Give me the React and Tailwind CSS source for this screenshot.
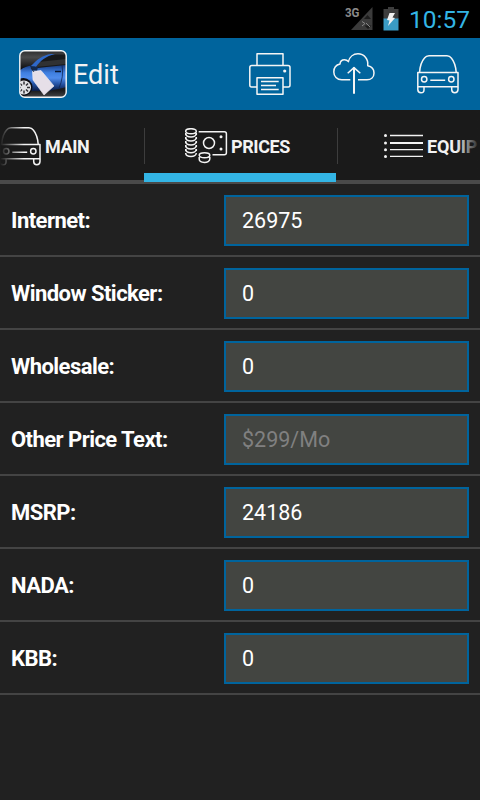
import React from "react";

const stroke = { fill: "none", stroke: "currentColor", strokeWidth: 1.5, strokeLinejoin: "round" };

function CarIcon() {
  return (
    <svg width="42" height="39" viewBox="0 0 42 39" {...stroke}>
      <path d="M2.6 17.3C3 10 5.5 5.3 7.5 3C8.6 1.5 9.8 .8 12 .8H30C32 .8 33.200 1.500 34.300 3C36.400 5.500 38.700 10 39.200 17.300" />
      <path d="M.8 17.600H41V31.700H.8Z" />
      <circle cx="7.200" cy="24.300" r="2.700" />
      <circle cx="34.300" cy="24.300" r="2.700" />
      <path d="M13.300 25.200H28.200M.8 31.700V34.500Q.8 37.700 4 37.700T7 34.500V31.700M34.700 31.700V34.500Q34.700 37.700 37.800 37.700T41 34.500V31.700" />
    </svg>
  );
}

function PrinterIcon() {
  return (
    <svg width="42" height="42" viewBox="0 0 42 42" {...stroke}>
      <path d="M8 12.500V.8H34V12.500" />
      <path d="M8 34H2.500Q.8 34 .8 32V14.500Q.8 12.500 2.800 12.500H39Q41 12.500 41 14.500V32Q41 34 39.300 34H34" />
      <path d="M8 24.700H34V41.200H8Z" />
      <path d="M12 28.600H29.700M12 32.600H27M12 36.600H29.700" />
      <circle cx="35.700" cy="18" r="1.600" fill="currentColor" stroke="none" />
    </svg>
  );
}

function CloudIcon() {
  return (
    <svg width="42" height="42" viewBox="0 0 42 42" {...stroke}>
      <path d="M17.300 26.700H8.700C4 26.700 .8 23.200 .8 18.900C.8 14.800 3.400 11.800 7 11C7.200 8.400 9.300 6.800 11.500 6.800Q13.800 6.800 15.400 8.600C16.500 4 20.200 .8 25 .8C31 .8 35.600 6 34.700 12.700C38.500 13.500 41 16.200 41 19.900C41 24 38 26.700 34 26.700H25" />
      <path d="M14.700 20.300L21 14.600L27.300 20.300" />
      <path d="M21 14.600V40.700" strokeWidth="2" />
    </svg>
  );
}

function MoneyIcon() {
  return (
    <svg width="43" height="36" viewBox="0 0 43 36" {...stroke}>
      <ellipse cx="6" cy="3.200" rx="5.300" ry="2.500" />
      <path d="M.7 5.500C.7 10 11.300 10 11.300 5.500M.7 9.500C.7 14 11.300 14 11.300 9.500M.7 13.500C.7 18 11.300 18 11.300 13.500M.7 17.500C.7 22 11.300 22 11.300 17.500M.7 21.300C.7 25.800 11.300 25.800 11.300 21.300M.7 25C.7 29.500 11.300 29.500 11.300 25" />
      <path d="M.7 5V7M11.300 5V7M.7 9V11M11.300 9V11M.7 13V15M11.300 13V15M.7 17V19M11.300 17V19M.7 21V23M11.300 21V23" />
      <path d="M13.700 3.700H39.300Q41.400 3.700 41.400 5.800V24.700Q41.400 26.700 39.300 26.700H27.500" />
      <circle cx="24" cy="15" r="5.500" />
      <circle cx="36" cy="8.800" r="1.500" fill="currentColor" stroke="none" />
      <circle cx="36" cy="21" r="1.500" fill="currentColor" stroke="none" />
      <ellipse cx="19.500" cy="27.200" rx="5.300" ry="2.500" />
      <path d="M14.200 29V31C14.200 35.500 24.800 35.500 24.800 31V29" />
    </svg>
  );
}

function ListIcon() {
  return (
    <svg width="40" height="24" viewBox="0 0 40 24" fill="currentColor">
      <circle cx="1.500" cy="1.500" r="1.500" />
      <circle cx="1.500" cy="9" r="1.500" />
      <circle cx="1.500" cy="15.700" r="1.500" />
      <circle cx="1.500" cy="22.400" r="1.500" />
      <path d="M6 .8H39V2.200H6ZM6 8H39V10H6ZM6 15H39V16.300H6ZM6 21.800H39V23.100H6Z" />
    </svg>
  );
}

function AppLogo() {
  return (
    <svg width="48" height="48" viewBox="0 0 48 48">
      <defs>
        <clipPath id="logoClip"><rect x="1" y="1" width="46" height="46" rx="5" /></clipPath>
        <linearGradient id="logoBg" x1="0" y1="0" x2="0" y2="1">
          <stop offset="0" stopColor="#2a2a2c" /><stop offset=".15" stopColor="#4a4a4c" />
          <stop offset=".4" stopColor="#0c0c0e" /><stop offset=".85" stopColor="#1c1c1e" />
          <stop offset="1" stopColor="#4a4a4c" />
        </linearGradient>
        <linearGradient id="logoCar" x1="0" y1="15" x2="0" y2="41" gradientUnits="userSpaceOnUse">
          <stop offset="0" stopColor="#173a80" /><stop offset=".3" stopColor="#3f7fe0" />
          <stop offset=".5" stopColor="#4f8cec" /><stop offset=".75" stopColor="#234f9e" />
          <stop offset="1" stopColor="#0a1a42" />
        </linearGradient>
      </defs>
      <g clipPath="url(#logoClip)">
        <rect width="48" height="48" fill="url(#logoBg)" />
        <path d="M15 17C20 10 26 5.500 34 4.500H48V17Z" fill="#18191b" />
        <path d="M19 12L48 9V14L17 17Z" fill="#303133" />
        <path d="M0 21Q6 16 13 15.500L18 18L48 15V37L30 41H12L10 31L0 29Z" fill="url(#logoCar)" />
        <path d="M12 16C18 9.500 24 5 32 4H36C27 6 21 11 17 17Z" fill="#2f68c8" />
        <path d="M43 15Q45 27 40 38" stroke="#102450" fill="none" strokeWidth=".8" />
        <path d="M11 16L19 17L18 21L13 20Z" fill="#12294f" />
        <path d="M36 21.500H42" stroke="#09172f" strokeWidth="1.600" />
        <circle cx="4.500" cy="37" r="9" fill="#0c0c10" />
        <circle cx="5" cy="37.500" r="7" fill="#e2e3e6" />
        <path d="M5 31.500V34.500M5 40.500V43.500M-1 37.500H2M8 37.500H11M1 33.500L3 35.500M9 33.500L7 35.500M1 41.500L3 39.500M9 41.500L7 39.500" stroke="#303034" strokeWidth="1.500" />
        <path d="M13.500 21.500L22 20.500L35 36L25 45L14 30Z" fill="#e6dfe8" stroke="#f4f0f5" strokeWidth=".6" />
        <path d="M15 22L12 18" stroke="#222" strokeWidth=".8" />
      </g>
      <rect x=".8" y=".8" width="46.400" height="46.400" rx="5" fill="none" stroke="#f3f5f7" strokeWidth="1.400" />
    </svg>
  );
}

const rows = [
  ["Internet:", "26975"],
  ["Window Sticker:", "0"],
  ["Wholesale:", "0"],
  ["Other Price Text:", "", "$299/Mo"],
  ["MSRP:", "24186"],
  ["NADA:", "0"],
  ["KBB:", "0"],
];

export default function App() {
  return (
    <div className="flex h-[800px] w-[480px] flex-col overflow-hidden bg-[#212121] font-[Roboto,sans-serif] text-white">
      <div className="flex h-[38px] shrink-0 items-center justify-end bg-black pr-[10px]">
        <svg className="mr-[9px] mb-px" width="29" height="26" viewBox="0 0 29 26">
          <text x="0" y="11" fontFamily="Roboto" fontSize="12.500" fontWeight="700" fill="#8a8a8a" textLength="14.500" lengthAdjust="spacingAndGlyphs">3G</text>
          <path d="M27.500 1V24H6Z" fill="#3b3b3b" />
          <path d="M19 13L22.500 9L26 13ZM19.500 19.500H26.500L23 23Z" fill="#1c1c1c" />
          <path d="M17 15.500L20 17.500L17 20M21 17L25 21" stroke="#858585" fill="none" />
        </svg>
        <svg className="mr-[10px]" width="16" height="24" viewBox="0 0 16 24">
          <path d="M5 0H11V2H15.500V12H.5V2H5Z" fill="#3d3d3d" />
          <path d="M.5 11.500H15.500V23.500H.5Z" fill="#3a9bc4" />
          <path d="M6.500 6H12L9.500 10.500L12 11L5 19L6.500 13.500L4 13Z" fill="#f2f2f2" />
        </svg>
        <span className="pt-[2px] text-[24.500px] leading-none text-[#33b5e5]">10:57</span>
      </div>

      <header className="flex h-[72px] shrink-0 items-center bg-[#00649d] pr-[21px] pl-[19px]">
        <AppLogo />
        <h1 className="ml-[6px] flex-1 pt-[2px] text-[27px] leading-none font-normal text-[#f3f3f3]">Edit</h1>
        <div className="flex items-center gap-[42px] text-[#f5f5f5]">
          <PrinterIcon />
          <CloudIcon />
          <CarIcon />
        </div>
      </header>

      <nav className="relative h-[74px] shrink-0 border-b-4 border-[#4a4a4a] bg-[#1a1a1a]">
        <div className="h-[70px] overflow-hidden">
          <div className="-ml-12 flex h-[70px] w-[576px] text-[18px] font-bold tracking-[-0.4px] text-[#f3f3f3]">
            <div className="flex w-48 items-center pt-[2px] pl-[47px]"><CarIcon /><span className="ml-[4px]">MAIN</span></div>
            <div className="flex w-48 items-center pt-[2px] pl-[41px]"><MoneyIcon /><span className="ml-[3px]">PRICES</span></div>
            <div className="flex w-48 items-center pt-[2px] pl-[48px]"><ListIcon /><span className="ml-[3px] tracking-[-0.2px]">EQUIP</span></div>
          </div>
        </div>
        <div className="absolute top-[18px] left-[144px] h-9 w-px bg-[#3d3d3d]" />
        <div className="absolute top-[18px] left-[337px] h-9 w-px bg-[#3d3d3d]" />
        <div className="absolute top-0 left-0 h-[70px] w-[24px] bg-gradient-to-r from-[#1a1a1a] to-transparent" />
        <div className="absolute top-0 right-0 h-[70px] w-[24px] bg-gradient-to-l from-[#1a1a1a] to-transparent" />
        <div className="absolute top-[63px] left-[144px] h-[9px] w-48 bg-[#33b5e5]" />
      </nav>

      <main>
        {rows.map(([label, value, placeholder]) => (
          <label key={label} className="flex h-[73px] items-start border-b-2 border-[#444] pt-[11px] pr-[11px] pl-[11px]">
            <span className="flex h-[51px] w-[213px] items-center text-[22px] font-bold tracking-[-0.55px]">{label}</span>
            <input
              defaultValue={value}
              placeholder={placeholder}
              className="h-[51px] w-[245px] rounded-none border-2 border-[#00649d] bg-[#434541] px-4 text-[21.500px] text-white placeholder:text-[#808080]"
            />
          </label>
        ))}
      </main>
    </div>
  );
}
